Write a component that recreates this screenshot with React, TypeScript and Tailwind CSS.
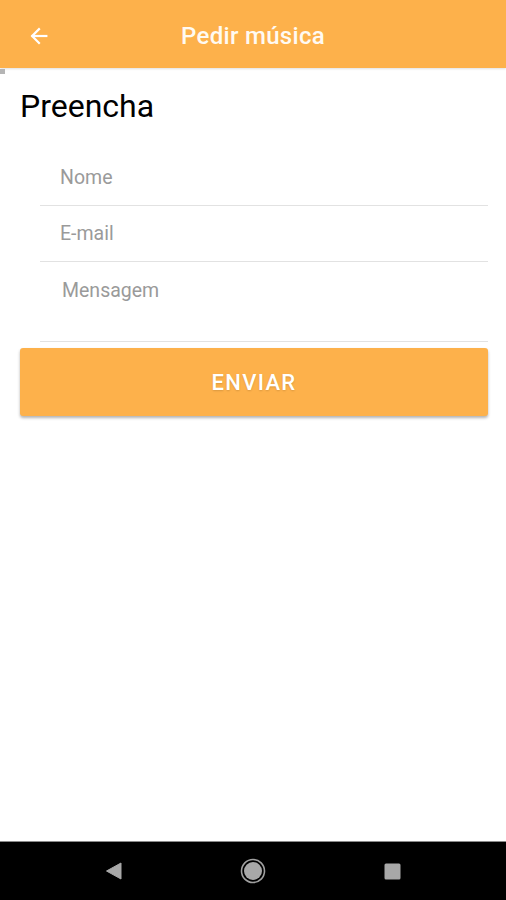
import React from 'react';

const fields = [
  { label: 'Nome', rowClass: 'h-[56px] items-center pl-[20px]' },
  { label: 'E-mail', rowClass: 'h-[56px] items-center pl-[20px]' },
  { label: 'Mensagem', rowClass: 'h-[80px] items-start pt-[18px] pl-[22px]' },
];

const App = () => {
  return (
    <div className="w-[506px] h-[900px] flex flex-col bg-white font-['Roboto',sans-serif] overflow-hidden">
      {/* toolbar */}
      <div className="relative h-[68px] bg-[#fdb14b] flex items-center justify-center pt-[3px] shadow-[0_1px_2px_rgba(0,0,0,0.12)]">
        <button className="absolute left-[27px] top-[24px] w-6 h-6 flex items-center justify-center">
          <svg width="22" height="22" viewBox="0 0 24 24" fill="none" stroke="white" strokeWidth="2.4" strokeLinecap="square">
            <path d="M20 12H5" />
            <path d="M12 4.5L4.5 12L12 19.5" />
          </svg>
        </button>
        <h1 className="text-[#fffaf2] text-[24px] font-medium leading-none tracking-[0.3px]">Pedir música</h1>
        <span className="absolute left-0 top-[69px] w-[5px] h-[5px] bg-[#b5b5b5]" />
      </div>

      <div className="flex-1 flex flex-col">
        <h2 className="mt-[20px] ml-[20px] text-[32px] leading-[36px] text-black">Preencha</h2>

        <div className="mt-[26px] ml-[40px] mr-[18px] flex flex-col">
          {fields.map((f) => (
            <div key={f.label} className={`flex border-b border-[#e2e2e2] ${f.rowClass}`}>
              <span className="text-[19.5px] leading-[22px] text-[#9a9a9a]">{f.label}</span>
            </div>
          ))}
        </div>

        <button className="mt-[6px] ml-[20px] mr-[18px] h-[68px] rounded-[3px] bg-[#fdb14b] shadow-[0_2px_3px_rgba(0,0,0,0.3)] flex items-center justify-center">
          <span className="text-white text-[22px] font-medium tracking-[1.3px] [text-shadow:0_1px_2px_rgba(0,0,0,0.15)]">ENVIAR</span>
        </button>
      </div>

      {/* system nav bar */}
      <div className="h-[59px] bg-black border-t border-[#8a8a8a] flex items-center justify-between px-[105px]">
        <svg width="17" height="18" viewBox="0 0 17 18">
          <path d="M16 1V17L1.5 9Z" fill="#a8a8a8" stroke="#a8a8a8" strokeLinejoin="round" />
        </svg>
        <svg width="26" height="26" viewBox="0 0 26 26">
          <circle cx="13" cy="13" r="11.5" fill="none" stroke="#a0a0a0" strokeWidth="1.6" />
          <circle cx="13" cy="13" r="9" fill="#a8a8a8" />
        </svg>
        <svg width="17" height="17" viewBox="0 0 17 17">
          <rect x="0.5" y="0.5" width="16" height="16" rx="1.5" fill="#a8a8a8" />
        </svg>
      </div>
    </div>
  );
};

export default App;
